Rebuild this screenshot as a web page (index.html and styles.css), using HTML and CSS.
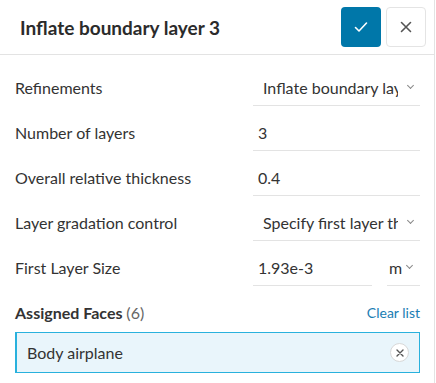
FILE: index.html
```html
<!DOCTYPE html>
<html lang="en">
<head>
    <meta charset="UTF-8">
    <meta name="viewport" content="width=device-width, initial-scale=1.0">
    <title>Inflate boundary layer 3</title>
    <link rel="stylesheet" href="styles.css">
</head>
<body>

    <div class="panel">
        <!-- header -->
        <div class="panel-header">
            <h1>Inflate boundary layer 3</h1>
            <div class="header-actions">
                <button class="btn-confirm" title="Save">
                    <svg width="14" height="12" viewBox="0 0 14 12"><path d="M1.5 6.5 L5 10 L12.5 2" fill="none" stroke="#fff" stroke-width="1.6" stroke-linecap="round" stroke-linejoin="round"/></svg>
                </button>
                <button class="btn-close" title="Close">
                    <svg width="12" height="12" viewBox="0 0 12 12"><path d="M1.5 1.5 L10.5 10.5 M10.5 1.5 L1.5 10.5" fill="none" stroke="#555" stroke-width="1.6" stroke-linecap="round"/></svg>
                </button>
            </div>
        </div>

        <!-- settings -->
        <div class="form">
            <div class="form-row">
                <label>Refinements</label>
                <div class="field select"><span class="value">Inflate boundary layer</span><span class="chevron"></span></div>
            </div>
            <div class="form-row">
                <label>Number of layers</label>
                <div class="field"><span class="value">3</span></div>
            </div>
            <div class="form-row">
                <label>Overall relative thickness</label>
                <div class="field"><span class="value">0.4</span></div>
            </div>
            <div class="form-row">
                <label>Layer gradation control</label>
                <div class="field select"><span class="value">Specify first layer thickness</span><span class="chevron"></span></div>
            </div>
            <div class="form-row">
                <label>First Layer Size</label>
                <div class="field-pair">
                    <div class="field"><span class="value">1.93e-3</span></div>
                    <div class="field select unit"><span class="value">m</span><span class="chevron"></span></div>
                </div>
            </div>

            <div class="assigned-head">
                <span class="assigned-title">Assigned Faces <span class="count">(6)</span></span>
                <a href="#" class="clear-link">Clear list</a>
            </div>
            <div class="assigned-item">
                <span>Body airplane</span>
                <span class="remove-item">
                    <svg width="8" height="8" viewBox="0 0 8 8"><path d="M1 1 L7 7 M7 1 L1 7" stroke="#555" stroke-width="1.4" stroke-linecap="round"/></svg>
                </span>
            </div>
        </div>
    </div>

</body>
</html>
```

FILE: styles.css
```css
/* page */
body {
    font-family: 'Lato', 'Liberation Sans', sans-serif;
    margin: 0;
    padding: 0;
    background-color: #fff;
    color: #333;
}

.panel {
    width: 434px;
    height: 383px;
    border-right: 1px solid #e3e3e3;
    overflow: hidden;
}

/* header */
.panel-header {
    height: 54px;
    display: flex;
    align-items: center;
    justify-content: space-between;
    padding: 0 8px 0 20px;
    border-bottom: 1px solid #e3e3e3;
}

h1 {
    margin: 0;
    font-size: 19px;
    font-weight: 700;
    color: #2b2b2b;
}

.header-actions {
    display: flex;
    gap: 5px;
}

.header-actions button {
    width: 40px;
    height: 40px;
    border-radius: 4px;
    display: flex;
    align-items: center;
    justify-content: center;
    padding: 0;
    cursor: pointer;
}

.btn-confirm {
    background-color: #0077a9;
    border: none;
}

.btn-close {
    background-color: #fff;
    border: 1px solid #e4e4e4;
}

/* rows */
.form {
    padding: 14px 14px 0 15px;
}

.form-row {
    display: grid;
    grid-template-columns: 1fr 167px;
    align-items: center;
    margin-bottom: 8px;
}

.form-row label {
    font-size: 16px;
    color: #333;
}

.field {
    height: 36px;
    border-bottom: 1px solid #e3e3e3;
    display: flex;
    align-items: center;
    padding-left: 5px;
    font-size: 16px;
    color: #333;
    overflow: hidden;
    white-space: nowrap;
}

.field.select {
    padding-left: 10px;
    padding-right: 4px;
}

.field .value {
    flex: 1;
    overflow: hidden;
}

.chevron {
    width: 4px;
    height: 4px;
    border-right: 1px solid #888;
    border-bottom: 1px solid #888;
    transform: rotate(45deg);
    margin: 0 3px 4px 10px;
    flex: none;
}

.field-pair {
    display: grid;
    grid-template-columns: 119px 33px;
    gap: 15px;
}

.field.unit {
    padding-left: 2px;
    padding-right: 2px;
}

.field.unit .value {
    flex: none;
}

.field.unit .chevron {
    margin-left: 5px;
}

/* assigned faces */
.assigned-head {
    display: flex;
    justify-content: space-between;
    align-items: center;
    margin-top: 17px;
    line-height: 20px;
}

.assigned-title {
    font-size: 16px;
    font-weight: 700;
    color: #333;
}

.assigned-title .count {
    font-weight: 400;
    color: #666;
}

.clear-link {
    font-size: 14px;
    color: #1a7db3;
    text-decoration: none;
}

.assigned-item {
    margin-top: 9px;
    height: 39px;
    border: 1px solid #29b1dd;
    border-left-width: 2px;
    background-color: #e9f5fb;
    display: flex;
    align-items: center;
    justify-content: space-between;
    padding: 0 10px 0 10px;
    font-size: 16px;
    color: #333;
}

.remove-item {
    width: 17px;
    height: 17px;
    border-radius: 50%;
    border: 1.5px solid #d8d8d8;
    background-color: #fff;
    display: flex;
    align-items: center;
    justify-content: center;
}
```
